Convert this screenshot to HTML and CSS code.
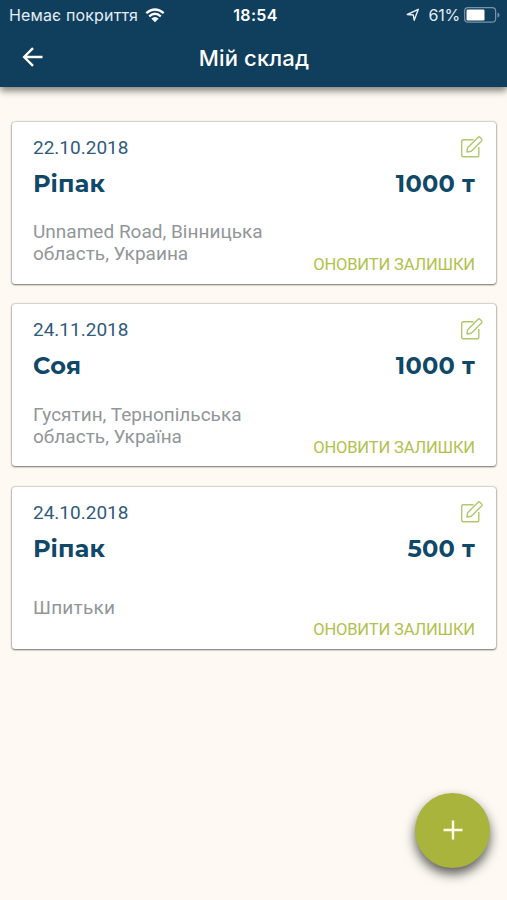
FILE: index.html
```html
<!DOCTYPE html>
<html lang="uk">
<head>
<meta charset="utf-8">
<title>Мій склад</title>
<link rel="stylesheet" href="styles.css">
</head>
<body>
<svg class="defs" width="0" height="0">
  <symbol id="edit" viewBox="0 0 24 24">
    <path d="M13.500 4.700H3.200Q1.700 4.700 1.700 6.200V20.300Q1.700 21.800 3.200 21.800H17.300Q18.800 21.800 18.800 20.300V12M7 17L7.600 12.700L17.900 2.400Q19 1.300 20.100 2.400L21.600 3.900Q22.600 5 21.500 6.100L11.300 16.300Z"/>
  </symbol>
</svg>
<div class="screen">
  <header class="header">
    <div class="status">
      <div class="status-left">
        <span class="carrier">Немає покриття</span>
        <svg class="wifi" viewBox="0 0 20 15"><path d="M1.300 5.200Q10-2.300 18.700 5.200M4.200 8.300Q10 3.300 15.800 8.300" fill="none" stroke="#fff" stroke-width="2.300"/><path d="M6.300 10.500Q10 7.300 13.700 10.500L10 14.200Z" fill="#fff"/></svg>
      </div>
      <span class="clock">18:54</span>
      <div class="status-right">
        <svg class="location" viewBox="0 0 14 14"><path d="M1.300 6.500L12.300 1.300L8.200 12.300L7.300 7Z" fill="none" stroke="#e4edf4" stroke-width="1.400" stroke-linejoin="round"/></svg>
        <span class="percent">61%</span>
        <svg class="battery" viewBox="0 0 36 16"><rect x=".6" y=".6" width="31" height="14.600" rx="3.500" fill="none" stroke="#7793aa" stroke-width="1.200"/><rect x="2.500" y="2.500" width="18" height="11" rx="1.200" fill="#fff"/><path d="M33.500 5.500Q35.500 6 35.500 8T33.500 10.500Z" fill="#7793aa"/></svg>
      </div>
    </div>
    <div class="bar">
      <svg class="back" viewBox="0 0 22 22"><path d="M20.500 11H2.500M11 2.200L2.200 11L11 19.800" fill="none" stroke="#fff" stroke-width="2.400"/></svg>
      <h1 class="title">Мій склад</h1>
      <span></span>
    </div>
  </header>
  <main class="list">
    <article class="card">
      <div class="row top"><span class="date">22.10.2018</span><svg class="edit"><use href="#edit"/></svg></div>
      <div class="row crop"><h2 class="name">Ріпак</h2><span class="amount">1000 т</span></div>
      <p class="place">Unnamed Road, Вінницька<br>область, Украина</p>
      <a class="update">ОНОВИТИ ЗАЛИШКИ</a>
    </article>
    <article class="card">
      <div class="row top"><span class="date">24.11.2018</span><svg class="edit"><use href="#edit"/></svg></div>
      <div class="row crop"><h2 class="name">Соя</h2><span class="amount">1000 т</span></div>
      <p class="place">Гусятин, Тернопільська<br>область, Україна</p>
      <a class="update">ОНОВИТИ ЗАЛИШКИ</a>
    </article>
    <article class="card">
      <div class="row top"><span class="date">24.10.2018</span><svg class="edit"><use href="#edit"/></svg></div>
      <div class="row crop"><h2 class="name">Ріпак</h2><span class="amount">500 т</span></div>
      <p class="place single">Шпитьки</p>
      <a class="update">ОНОВИТИ ЗАЛИШКИ</a>
    </article>
  </main>
  <button class="fab" aria-label="Додати"><svg viewBox="0 0 20 20"><path d="M10 .5V19.500M.5 10H19.500" stroke="#fffbe5" stroke-width="2.400"/></svg></button>
</div>
</body>
</html>
```
FILE: styles.css
```css
* { box-sizing: border-box; }
body { margin: 0; background: #fefaf3; font-family: Roboto, sans-serif; }
.defs { position: absolute; }
.screen { position: relative; height: 900px; overflow: hidden; }
.header { height: 87px; background: #103e5d; color: #fff; box-shadow: 0 4px 7px rgba(0, 0, 0, .48); font-family: Inter, sans-serif; }
.status { display: grid; grid-template-columns: 1fr auto 1fr; align-items: center; height: 30px; padding: 0 7px 0 9px; font-size: 16px; line-height: 30px; }
.status-left, .status-right { display: flex; align-items: center; }
.status-right { justify-content: flex-end; }
.carrier { color: #e4edf4; letter-spacing: .15px; }
.wifi { width: 20px; height: 15px; margin-left: 7px; }
.clock { padding-left: 2px; font-weight: 600; letter-spacing: .35px; }
.location { width: 14px; height: 14px; margin-right: 8px; }
.percent { color: #e4edf4; letter-spacing: -.2px; }
.battery { width: 36px; height: 16px; margin-left: 4px; }
.bar { display: grid; grid-template-columns: 1fr auto 1fr; align-items: center; height: 54px; padding: 0 22px; }
.back { width: 22px; height: 22px; }
.title { margin: 0; padding: 1px 0 0 1px; font-size: 22px; line-height: 30px; font-weight: 550; letter-spacing: .15px; }
.list { display: flex; flex-direction: column; gap: 20.400px; padding: 34.900px 11px 0 12px; }
.card { display: flex; flex-direction: column; height: 162px; padding: 13px 21px 8px; background: #fff; border-radius: 3px; box-shadow: 0 0 2px rgba(0, 0, 0, .5), 0 1px 2px rgba(0, 0, 0, .45); }
.row { display: flex; justify-content: space-between; }
.top { height: 26px; }
.date { font-size: 19px; line-height: 26px; color: #315b7c; }
.edit { width: 24px; height: 24px; margin-right: -9px; fill: none; stroke: #b4c66b; stroke-width: 1.400; stroke-linejoin: round; }
.crop { height: 46px; color: #104868; font-family: Montserrat, Inter, sans-serif; font-size: 24px; line-height: 46px; font-weight: 700; }
.name { margin: 0; font: inherit; letter-spacing: .3px; }
.amount { letter-spacing: .2px; }
.place { margin: 14.500px 0 0; height: 44px; color: #919699; font-size: 19px; line-height: 22px; letter-spacing: .01px; }
.single { padding-top: 11px; letter-spacing: .25px; }
.update { align-self: flex-end; margin-top: -11px; color: #b1c14c; font-size: 16.500px; line-height: 21px; font-weight: 450; letter-spacing: -.15px; }
.fab { position: absolute; right: 17px; top: 792.500px; display: grid; place-items: center; width: 75px; height: 75px; padding: 0; border: 0; border-radius: 50%; background: #a8b43c; box-shadow: 0 6px 12px rgba(0, 0, 0, .65); }
.fab svg { width: 20px; height: 20px; }
```
